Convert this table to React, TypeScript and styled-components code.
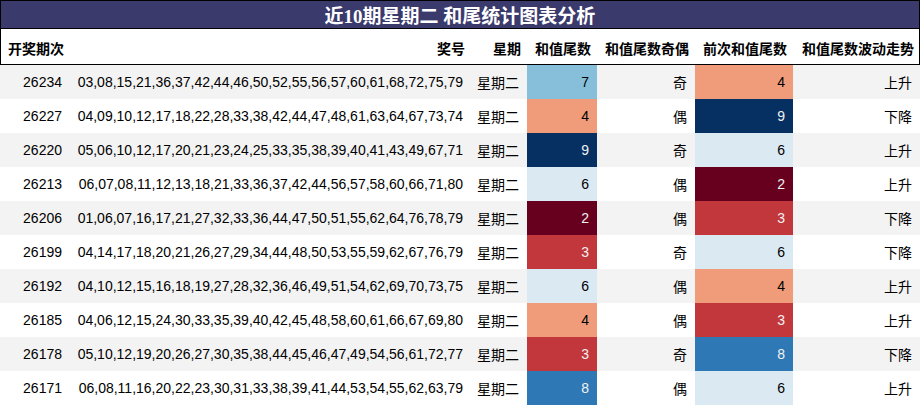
import React from "react";
import styled, { createGlobalStyle } from "styled-components";

const Global = createGlobalStyle`
  html, body { margin: 0; padding: 0; background: #ffffff; }
  body { font-family: "Liberation Sans", "Noto Sans CJK SC", sans-serif; }
`;

const COLS = "70px 401px 56px 70px 98px 98px 127px";

const Wrap = styled.div`
  width: 920px;
`;

const Title = styled.div`
  height: 27px;
  border: 1px solid #000;
  background: #3b3a6c;
  color: #ffffff;
  font-family: "Liberation Serif", "Noto Sans CJK SC", serif;
  font-weight: bold;
  font-size: 19px;
  display: flex;
  align-items: center;
  justify-content: center;
`;

const HeadRow = styled.div`
  display: grid;
  grid-template-columns: ${COLS};
  height: 35px;
  border-left: 1px solid #000;
  border-right: 1px solid #000;
  border-bottom: 1px solid #000;
  box-sizing: content-box;
  width: 918px;
`;

const HeadCell = styled.div`
  display: flex;
  align-items: center;
  justify-content: flex-end;
  padding: 3px 7px 0 0;
  font-weight: bold;
  font-size: 14px;
  color: #000;
  white-space: nowrap;
`;

const Row = styled.div<{ $alt: boolean }>`
  display: grid;
  grid-template-columns: ${COLS};
  height: 34px;
  background: ${(p) => (p.$alt ? "#f3f3f3" : "#ffffff")};
`;

const Cell = styled.div<{ $bg?: string; $fg?: string }>`
  display: flex;
  align-items: center;
  justify-content: flex-end;
  padding-right: 8px;
  font-size: 14px;
  color: ${(p) => p.$fg ?? "#000"};
  background: ${(p) => p.$bg ?? "transparent"};
  white-space: nowrap;
`;

const PALETTE: Record<number, [string, string]> = {
  2: ["#67001f", "#f1f1f1"],
  3: ["#c1373b", "#f1f1f1"],
  4: ["#f09c7b", "#000000"],
  6: ["#dbe9f3", "#000000"],
  7: ["#87beda", "#000000"],
  8: ["#2e78b5", "#f1f1f1"],
  9: ["#053061", "#f1f1f1"],
};

type R = [string, string, number, string, number, string];

const rows: R[] = [
  ["26234", "03,08,15,21,36,37,42,44,46,50,52,55,56,57,60,61,68,72,75,79", 7, "奇", 4, "上升"],
  ["26227", "04,09,10,12,17,18,22,28,33,38,42,44,47,48,61,63,64,67,73,74", 4, "偶", 9, "下降"],
  ["26220", "05,06,10,12,17,20,21,23,24,25,33,35,38,39,40,41,43,49,67,71", 9, "奇", 6, "上升"],
  ["26213", "06,07,08,11,12,13,18,21,33,36,37,42,44,56,57,58,60,66,71,80", 6, "偶", 2, "上升"],
  ["26206", "01,06,07,16,17,21,27,32,33,36,44,47,50,51,55,62,64,76,78,79", 2, "偶", 3, "下降"],
  ["26199", "04,14,17,18,20,21,26,27,29,34,44,48,50,53,55,59,62,67,76,79", 3, "奇", 6, "下降"],
  ["26192", "04,10,12,15,16,18,19,27,28,32,36,46,49,51,54,62,69,70,73,75", 6, "偶", 4, "上升"],
  ["26185", "04,06,12,15,24,30,33,35,39,40,42,45,48,58,60,61,66,67,69,80", 4, "偶", 3, "上升"],
  ["26178", "05,10,12,19,20,26,27,30,35,38,44,45,46,47,49,54,56,61,72,77", 3, "奇", 8, "下降"],
  ["26171", "06,08,11,16,20,22,23,30,31,33,38,39,41,44,53,54,55,62,63,79", 8, "偶", 6, "上升"],
];

const headers = ["开奖期次", "奖号", "星期", "和值尾数", "和值尾数奇偶", "前次和值尾数", "和值尾数波动走势"];

export default function App() {
  return (
    <Wrap>
      <Global />
      <Title>近10期星期二 和尾统计图表分析</Title>
      <HeadRow>
        {headers.map((h) => (
          <HeadCell key={h}>{h}</HeadCell>
        ))}
      </HeadRow>
      {rows.map((r, i) => (
        <Row key={r[0]} $alt={i % 2 === 0}>
          <Cell>{r[0]}</Cell>
          <Cell>{r[1]}</Cell>
          <Cell>星期二</Cell>
          <Cell $bg={PALETTE[r[2]][0]} $fg={PALETTE[r[2]][1]}>{r[2]}</Cell>
          <Cell>{r[3]}</Cell>
          <Cell $bg={PALETTE[r[4]][0]} $fg={PALETTE[r[4]][1]}>{r[4]}</Cell>
          <Cell>{r[5]}</Cell>
        </Row>
      ))}
    </Wrap>
  );
}
